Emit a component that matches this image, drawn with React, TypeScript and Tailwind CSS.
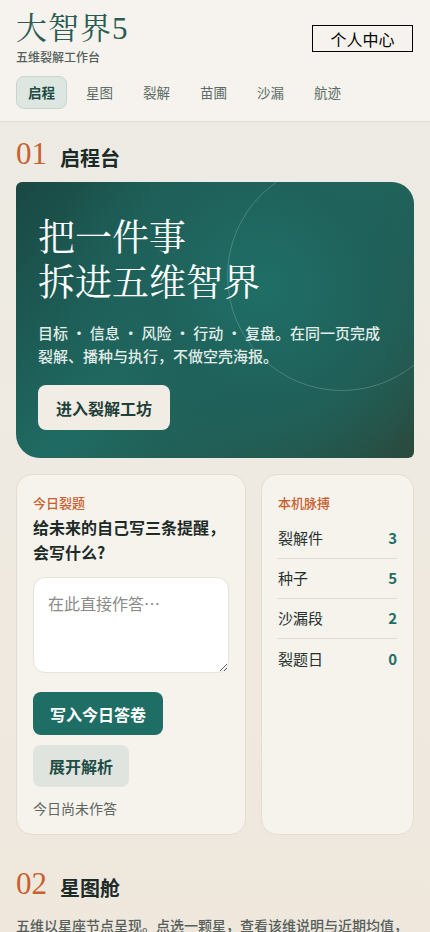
import { useState } from "react";

const tabs = ["启程", "星图", "裂解", "苗圃", "沙漏", "航迹"];

const pulse = [
  { label: "裂解件", value: 3 },
  { label: "种子", value: 5 },
  { label: "沙漏段", value: 2 },
  { label: "裂题日", value: 0 },
];

const serif = "font-['Liberation_Serif','Noto_Serif_CJK_SC','Noto_Serif_SC',serif]";

function SectionTitle({ no, title }: { no: string; title: string }) {
  return (
    <div className="flex items-end gap-[13px]">
      <span className={`${serif} text-[31px] leading-none text-[#c8602f]`}>{no}</span>
      <h2 className="pb-[1px] text-[20px] font-bold leading-none text-[#1d2b28]">{title}</h2>
    </div>
  );
}

export default function App() {
  const [active, setActive] = useState("启程");
  const [answer, setAnswer] = useState("");

  return (
    <div className="min-h-[932px] bg-gradient-to-b from-[#ecebe4] via-[#efeae1] to-[#efe7dc] font-['Noto_Sans_CJK_SC','Noto_Sans',sans-serif] text-[#1d2b28]">
      <header className="border-b border-[#e2ddd4] bg-[#f6f3ee] px-4 pt-[10px] pb-[12px]">
        <div className="flex items-start justify-between">
          <div>
            <h1 className={`${serif} text-[31px] leading-[38px] tracking-[1px] text-[#2a5c53]`}>大智界5</h1>
            <p className="text-[12px] font-medium leading-[18px] text-[#55605c]">五维裂解工作台</p>
          </div>
          <button
            type="button"
            className="mt-[15px] mr-[1px] h-[27px] w-[101px] border border-black text-[16px] leading-none text-black"
          >
            个人中心
          </button>
        </div>
        <nav className="mt-[10px] flex items-center">
          {tabs.map((t) => (
            <button
              key={t}
              type="button"
              onClick={() => setActive(t)}
              className={
                t === active
                  ? "mr-[8px] h-[33px] rounded-lg border border-[#c6d6ce] bg-[#dee6e1] px-[11px] text-[13.5px] font-bold text-[#1e4d45]"
                  : "mr-[8px] h-[33px] px-[11px] text-[13.5px] text-[#5b6b66]"
              }
            >
              {t}
            </button>
          ))}
        </nav>
      </header>

      <main className="px-4">
        <section className="pt-[16px]">
          <SectionTitle no="01" title="启程台" />

          <div className="relative mt-[13px] overflow-hidden rounded-tl-[6px] rounded-tr-[22px] rounded-bl-[24px] rounded-br-[6px] bg-[radial-gradient(circle_at_62%_38%,#1f6f67_0%,#1f625b_35%,transparent_70%),linear-gradient(135deg,#1a4843_0%,#1f6b63_45%,#23584e_75%,#2b4a3e_100%)] pl-[22px] pr-[26px] pt-[34px] pb-[28px]">
            <div className="pointer-events-none absolute left-[211px] top-[-21px] h-[230px] w-[230px] rounded-full border border-white/20" />
            <h3 className={`${serif} relative text-[37px] leading-[45px] text-white`}>
              把一件事
              <br />
              拆进五维智界
            </h3>
            <p className="relative mt-[15px] text-[15px] font-medium leading-[23px] text-[#e2ece8]">
              目标 · 信息 · 风险 · 行动 · 复盘。在同一页完成裂解、播种与执行，不做空壳海报。
            </p>
            <button
              type="button"
              className="relative mt-[18px] h-[45px] rounded-lg bg-[#f1ece4] px-[18px] text-[16px] font-bold text-[#1e3f3a]"
            >
              进入裂解工坊
            </button>
          </div>

          <div className="mt-[16px] grid grid-cols-[230px_1fr] gap-[15px]">
            <div className="rounded-[16px] border border-[#e4ddd2] bg-[#f6f2ec] px-[16px] pt-[18px] pb-[16px]">
              <div className="text-[13px] font-medium leading-[19px] text-[#c8602f]">今日裂题</div>
              <p className="mt-[3px] text-[16px] font-bold leading-[25px] text-[#1d2b28]">
                给未来的自己写三条提醒，会写什么?
              </p>
              <textarea
                value={answer}
                onChange={(e) => setAnswer(e.target.value)}
                placeholder="在此直接作答…"
                className="mt-[12px] block h-[96px] w-full rounded-xl border border-[#e8e2d8] bg-white px-[14px] py-[13px] text-[16px] leading-[24px] outline-none placeholder:text-[#8a8a88]"
              />
              <button
                type="button"
                className="mt-[19px] block h-[43px] rounded-lg bg-[#1f6e66] px-[17px] text-[16px] font-bold text-white"
              >
                写入今日答卷
              </button>
              <button
                type="button"
                className="mt-[10px] block h-[42px] rounded-lg bg-[#dfe4df] px-[16px] text-[16px] font-bold text-[#1e4d45]"
              >
                展开解析
              </button>
              <p className="mt-[11px] text-[14px] leading-[20px] text-[#5d6662]">今日尚未作答</p>
            </div>

            <div className="rounded-[16px] border border-[#e4ddd2] bg-[#f6f2ec] px-[16px] pt-[18px]">
              <div className="text-[13px] font-medium leading-[19px] text-[#c8602f]">本机脉搏</div>
              <ul className="mt-[7px]">
                {pulse.map((p, i) => (
                  <li
                    key={p.label}
                    className={`flex h-[40px] items-center justify-between ${i < pulse.length - 1 ? "border-b border-[#e0dbd2]" : ""}`}
                  >
                    <span className="text-[15px] text-[#25302d]">{p.label}</span>
                    <span className="text-[15px] font-bold text-[#1f6e66]">{p.value}</span>
                  </li>
                ))}
              </ul>
            </div>
          </div>
        </section>

        <section className="pt-[33px] pb-[24px]">
          <SectionTitle no="02" title="星图舱" />
          <p className="mt-[15px] text-[14px] font-medium leading-[22px] text-[#55605c]">
            五维以星座节点呈现。点选一颗星，查看该维说明与近期均值，以及你最近一次写下的观察。
          </p>
        </section>
      </main>
    </div>
  );
}
